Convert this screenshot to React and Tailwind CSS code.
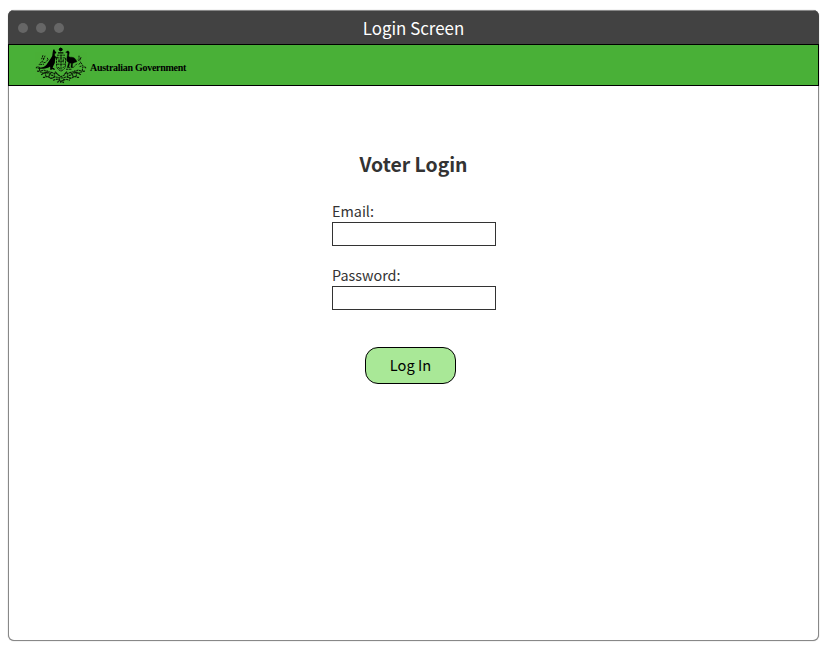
function Crest() {
  return (
    <svg width="52" height="38" viewBox="35 46.300 52 38" className="block shrink-0" fill="none" stroke="#000" aria-label="Coat of arms">
      <g fill="#000" stroke="none">
        <path d="M60.700 47.500l.6.900 1-.2-.1 1 .9.600-.9.600.1 1-1-.2-.6.900-.6-.9-1 .2.100-1-.9-.6.900-.6-.1-1 1 .2z" />
        <path d="M58 52.600h5.400v1.100H58z" />
        <path d="M53.300 49.300l.9 1.800.4-1.900.5 2.200 1.300 1.700-.7.700-.9-.1v2.300l1.500 1.200 1.700-.2v.8l-2.400.3-.6 2.400-.2 2.800-1.300 2.500-.9 2.200 1.500.6v.700h-3.800l-.2-2.400-1.500.8c-2.800 1.200-6.500 1.700-10.900 1.200v-.9c4.300.2 7.200-.9 8.800-2.900 1.500-2 2.300-3.800 3.900-5.800l1.800-3.100.5-3.600z" />
        <path stroke="#000" strokeWidth=".4" d="M65.700 52.600l1.700-1.200c1.400-.2 2 .7 1.800 1.900l-.5 2.700c0 1.500 1.200 1.500 2.800 1.500 2.700 0 4.500 1.800 5.400 4.600l-2.300.6-2 1-.3 3.400 1.300.7h-2.700l.4-4.300-1.500-.1-1.100 3.800 1.300.6h-2.800l1.500-5c-1.800-.9-2.300-2.200-1.900-3.800.3-2 .8-3.900.8-5.800z" />
      </g>
      <g opacity=".85">
        <path strokeWidth=".95" strokeDasharray="2.500 .6" d="M57 55.500h8M56.500 58.200h9M56.500 58v7.500c0 3 2 4.800 4.500 6 2.500-1.200 4.500-3 4.500-6V58M61 55v16M57 64.500h8M59 59.500v3.500M63.300 59.500v3.500M58 67.500l2 1.500M62.500 68.500l2-2M58 61.500h6" />
        <path strokeWidth="1" strokeDasharray="1.900 .7" d="M45 56l-1 3-2-1M44 59l-2 3 3 1M43 55.500l-1.500 4M41.500 62l-2.500 3 5-.5M48 60l-3 3M48 60l-1-2.500M79 56v4l2-1M78 60l3 3-3 2M81 57.500l-1 3M81 63l2 3-4 1M77 64l-3 3" />
        <path strokeWidth="1.100" strokeDasharray="2.200 .6" d="M36 68.500c2-3 4-1 3.500 1s2 2 3.500 1 3 2 5 .500M37 71.500c3-.5 4 2 7 2s4-2 7-1 4 2 6 1M41 75c3-1 3-3 6-2s4 4 8 2M43 77.500c2 1 4-2 6 0s4 1 6-1M51 73l-3 5M45 72l1 5" />
        <path strokeWidth="1.100" strokeDasharray="2.200 .6" d="M86 68.500c-2-3-4-1-3.500 1s-2 2-3.500 1-3 2-5 .500M85 71.500c-3-.5-4 2-7 2s-4-2-7-1-4 2-6 1M81 75c-3-1-3-3-6-2s-4 4-8 2M79 77.500c-2 1-4-2-6 0s-4 1-6-1M71 73l3 5M77 72l-1 5" />
        <path strokeWidth="1.150" strokeDasharray="2.200 .6" d="M50 78.500c3 .5 4-2 7-1s5 1 8 0 4 1.500 7 1M53 80.500l4-1 4 2 5-2 4 1M58 75l3 2 4-2M57 82.500l3-1 4 1.500M59 79l2 4M64 79l-1 3M55 72l3 3M67 72l-3 3M50 69.500h5M66 69.500h6" />
      </g>
    </svg>
  );
}

function Field({ label, type }) {
  return (
    <label className="block">
      <span className="block h-[20px] whitespace-nowrap text-[14.4px] leading-[18px] text-[#333]">{label}</span>
      <input type={type} className="block h-[24px] w-[164px] border border-[#333] bg-white outline-none" />
    </label>
  );
}

export default function App() {
  return (
    <div className="h-[651px] w-[826px] bg-white px-[8px] pt-[10px] font-['Noto_Sans_CJK_SC',sans-serif]">
      <div className="flex h-[631px] w-[811px] flex-col overflow-hidden rounded-[6px] bg-[#888] shadow-[0_0_1px_#888]">
        <header className="grid h-[34px] shrink-0 grid-cols-[1fr_auto_1fr] items-center border-t border-[#888] bg-[#424242]">
          <div className="flex gap-[8px] pl-[10px]">
            <i className="size-[10px] rounded-full bg-[#666]" />
            <i className="size-[10px] rounded-full bg-[#666]" />
            <i className="size-[10px] rounded-full bg-[#666]" />
          </div>
          <h1 className="whitespace-nowrap text-[16.9px] leading-[26px] text-white">Login Screen</h1>
        </header>
        <div className="flex h-[42px] shrink-0 items-center border border-black bg-[#49b037] pl-[26px]">
          <Crest />
          <span className="ml-[3px] mt-[5px] whitespace-nowrap font-['Liberation_Serif',serif] text-[10px] font-bold leading-[12px] tracking-[-0.28px] text-black">Australian Government</span>
        </div>
        <main className="mx-px mb-px flex flex-1 flex-col rounded-b-[5px] bg-white pl-[323px] pt-[63px]">
          <h2 className="w-[163px] whitespace-nowrap text-center text-[19.4px] font-bold leading-[30px] text-[#333]">Voter Login</h2>
          <form className="mt-[23px] flex w-[164px] flex-col gap-[20px]">
            <Field label="Email:" type="email" />
            <Field label="Password:" type="password" />
            <button type="button" className="ml-[33px] mt-[17px] h-[37px] w-[91px] rounded-[13px] border border-black bg-[#a9e897] pb-[1px] text-[14.6px] leading-[20px] text-black">Log In</button>
          </form>
        </main>
      </div>
    </div>
  );
}
